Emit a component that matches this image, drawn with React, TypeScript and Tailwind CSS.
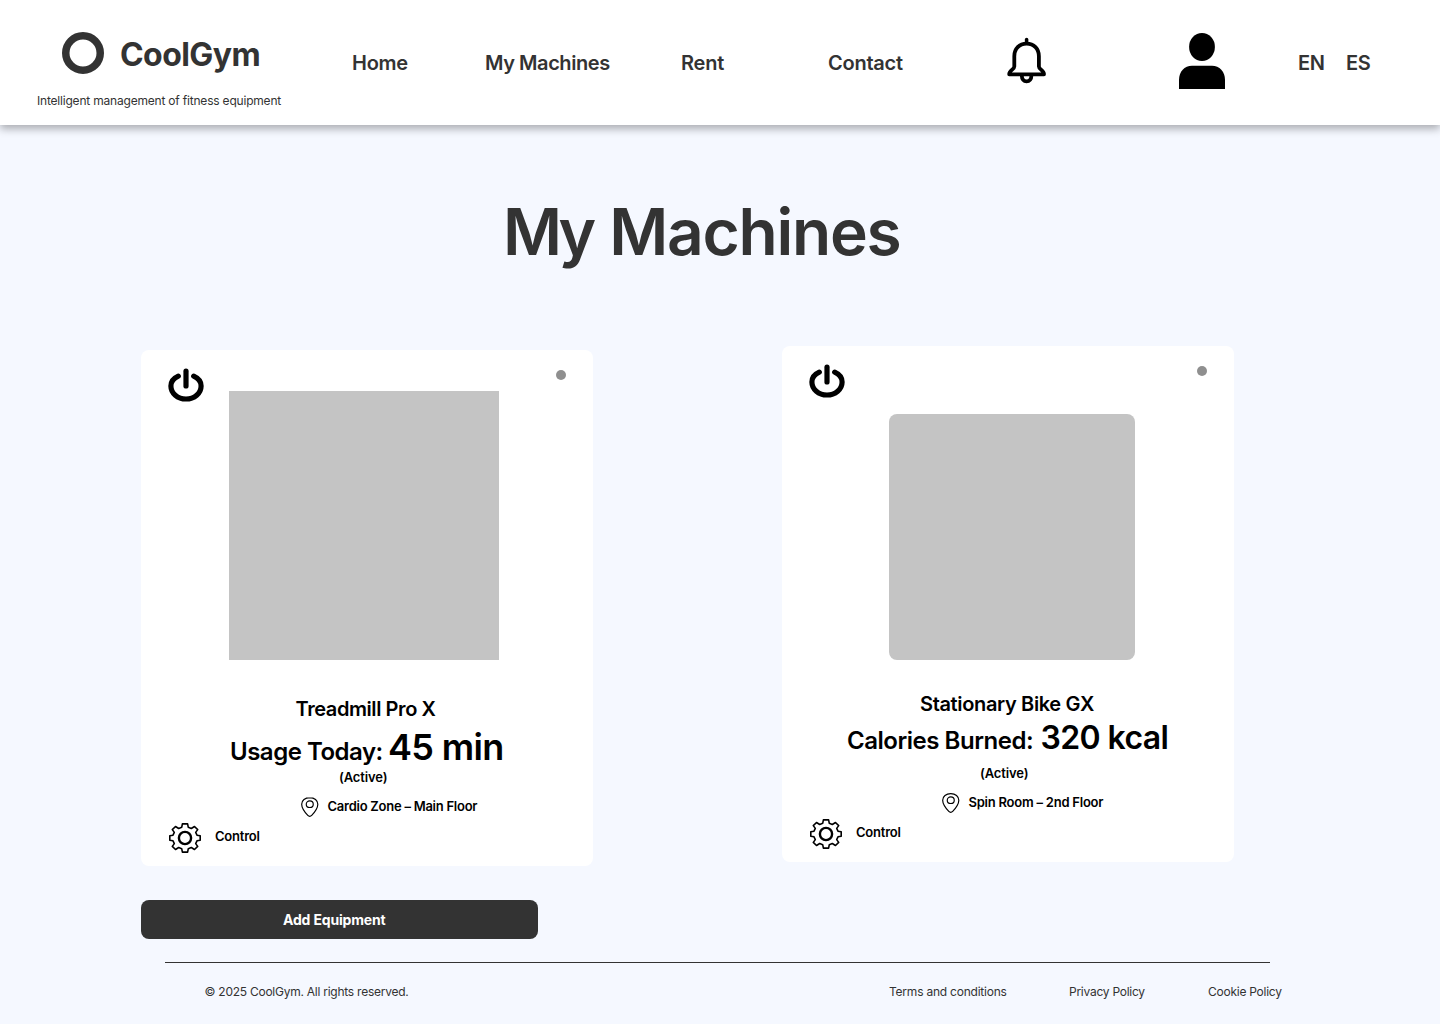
import type { ReactNode } from "react";

function PowerIcon() {
  return (
    <svg className="block h-[34px] w-[36px]" viewBox="0 0 36 34" fill="none" stroke="black" strokeWidth="5.2" strokeLinecap="round">
      <path d="M10.3 8.1C5.6 10.2 2.9 13.8 2.9 18C2.9 25.2 9.6 31 18 31S33.100 25.200 33.100 18C33.100 13.800 30.400 10.200 25.700 8.100" />
      <path d="M18 3.200V18" />
    </svg>
  );
}

function BellIcon() {
  return (
    <svg className="block h-[47px] w-[40px]" viewBox="0 0 40 47" fill="none" stroke="black" strokeWidth="3.800" strokeLinecap="round" strokeLinejoin="round">
      <path d="M19.600 2.400V6" strokeWidth="3.500" />
      <path d="M7.300 19.200C7.300 11.700 12.300 6.600 19.600 6.600S31.900 11.700 31.900 19.200V29.500C31.900 32.800 37 32.800 37 37.300H2.200C2.200 32.800 7.300 32.800 7.300 29.500Z" />
      <path d="M14.800 38.500C14.800 42 16.700 44.300 19.600 44.300S24.400 42 24.400 38.500" />
    </svg>
  );
}

function PersonIcon() {
  return (
    <svg className="block h-14 w-[46px]" viewBox="0 0 46 56">
      <ellipse cx="23" cy="14" rx="12.900" ry="14" />
      <path d="M0 56V47C0 38.500 5.500 32.700 13 32.700H33C40.500 32.700 46 38.500 46 47V56Z" />
    </svg>
  );
}

function PinIcon() {
  return (
    <svg className="mt-px block h-[20px] w-[17.500px]" viewBox="0 0 18 21" preserveAspectRatio="none" fill="none" stroke="black" strokeWidth="1.200">
      <path d="M9 0.700C4.200 0.700 0.700 3.700 0.700 7.600C0.700 10.800 4.300 16.400 7 19.400C8.200 20.700 9.800 20.700 11 19.400C13.700 16.400 17.300 10.800 17.300 7.600C17.300 3.700 13.800 0.700 9 0.700Z" />
      <ellipse cx="9" cy="7.500" rx="3.600" ry="3.500" />
    </svg>
  );
}

function GearIcon() {
  return (
    <svg className="block h-[30px] w-[32px]" viewBox="0 0 32 30" fill="none" stroke="black" strokeWidth="1.600" strokeLinejoin="round">
      <path d="M13.400 0.900H18.600L19.300 4.300L22.300 5.500L25.500 3.500L28.700 6.600L26.700 9.400L28 12.200L31.200 12.800V17.200L28 17.800L26.700 20.600L28.700 23.400L25.500 26.500L22.300 24.500L19.300 25.700L18.600 29.100H13.400L12.700 25.700L9.700 24.500L6.500 26.500L3.300 23.400L5.300 20.600L4 17.800L0.800 17.200V12.800L4 12.200L5.300 9.400L3.300 6.600L6.500 3.500L9.700 5.500L12.700 4.300Z" />
      <circle cx="16" cy="15" r="6.100" strokeWidth="2.400" />
    </svg>
  );
}

function Control() {
  return (
    <div className="flex pl-7">
      <GearIcon />
      <span className="ml-[14px] mt-[3px] h-5 text-[13px] leading-5 tracking-[-0.016em]">Control</span>
    </div>
  );
}

function Card({ className, children }: { className: string; children: ReactNode }) {
  return (
    <article className={`h-[516px] w-[452px] rounded-lg bg-white font-semibold text-black ${className}`}>
      <div className="flex h-[41px] items-start justify-between px-[27px]">
        <div className="pt-[18px]"><PowerIcon /></div>
        <div className="mt-5 size-[10px] rounded-full bg-[#8f8f8f]" />
      </div>
      {children}
    </article>
  );
}

export default function App() {
  return (
    <div className="flex h-[1024px] w-[1440px] flex-col overflow-hidden whitespace-nowrap bg-[#f5f8ff] font-[Inter,sans-serif] text-[#333333]">
      <header className="flex h-[125px] shrink-0 items-start bg-white shadow-[0_4px_8px_rgba(0,0,0,0.3)]">
        <div className="w-[352px] shrink-0 pt-8">
          <div className="flex pl-[62px]">
            <svg className="size-[42px]" viewBox="0 0 42 42" fill="none">
              <circle cx="21" cy="21" r="17.250" stroke="#333333" strokeWidth="7.500" />
            </svg>
            <span className="ml-4 mt-[3px] h-10 text-[32px] font-bold leading-10 tracking-[-0.018em]">CoolGym</span>
          </div>
          <p className="mt-[18px] pl-[37px] text-xs leading-4 tracking-[-0.0165em]">Intelligent management of fitness equipment</p>
        </div>
        <nav className="mt-[49px] flex text-xl font-semibold leading-7">
          <a className="w-[133px] tracking-[-0.014em]">Home</a>
          <a className="w-[196px] tracking-[-0.022em]">My Machines</a>
          <a className="w-[147px] tracking-[-0.012em]">Rent</a>
          <a className="w-[179px] tracking-[-0.012em]">Contact</a>
        </nav>
        <div className="mt-[37px]"><BellIcon /></div>
        <div className="ml-[132px] mt-[33px]"><PersonIcon /></div>
        <div className="mt-[49px] flex text-xl font-semibold leading-7 tracking-[-0.015em]">
          <span className="ml-[73px] w-12">EN</span>
          <span>ES</span>
        </div>
      </header>

      <main className="shrink-0">
        <h1 className="mt-[67px] pl-[503px] text-[64px] font-semibold leading-[80px] tracking-[-0.0195em] [word-spacing:-0.5px]">
          <span className="tracking-[-0.055em]">M</span>y Machines
        </h1>

        <div className="mt-[74px] flex items-start gap-[189px] pl-[141px]">
          <Card className="mt-1">
            <div className="ml-[88px] h-[269px] w-[270px] bg-[#c4c4c4]" />
            <h2 className="mt-[35px] h-[27px] pl-[154.500px] text-xl leading-7 tracking-[-0.021em]">Treadmill Pro X</h2>
            <p className="flex h-[45px] items-baseline pl-[89px] leading-[50px]">
              <span className="w-[158px] text-2xl leading-[50px] tracking-[-0.0205em]">Usage Today:</span>
              <span className="text-4xl leading-[50px] tracking-[-0.018em]">45 min</span>
            </p>
            <p className="pl-[198px] text-[13px] leading-5 tracking-[-0.01em]">(Active)</p>
            <div className="mt-[9px] flex h-[27px] pl-[160px]">
              <PinIcon />
              <span className="ml-[9px] text-[13px] leading-5 tracking-[-0.0195em]">Cardio Zone – Main Floor</span>
            </div>
            <Control />
          </Card>

          <Card className="">
            <div className="ml-[107px] mt-[27px] size-[246px] rounded-lg bg-[#c4c4c4]" />
            <h2 className="mt-[30px] pl-[138px] text-xl leading-7 tracking-[-0.0175em]">Stationary Bike GX</h2>
            <p className="flex h-[45px] items-baseline pl-[65px]">
              <span className="w-[193.500px] text-2xl leading-10 tracking-[-0.0195em]">Calories Burned:</span>
              <span className="text-[32px] leading-10 tracking-[-0.0192em]">320 kcal</span>
            </p>
            <p className="pl-[198px] text-[13px] leading-5 tracking-[-0.01em]">(Active)</p>
            <div className="mt-[9px] flex h-[27px] pl-[160px]">
              <PinIcon />
              <span className="ml-[9px] text-[13px] leading-5 tracking-[-0.018em]">Spin Room – 2nd Floor</span>
            </div>
            <Control />
          </Card>
        </div>

        <button className="ml-[141px] mt-[34px] block h-[39px] w-[397px] rounded-lg bg-[#333333] pl-[142px] text-left text-sm font-bold leading-5 tracking-[-0.012em] text-white">
          Add Equipment
        </button>
      </main>

      <footer className="ml-[165px] mt-[23px] w-[1105px] border-t border-[#333333] text-xs leading-4">
        <div className="mt-[21px] flex">
          <span className="ml-[39.500px] w-[684.500px] shrink-0 tracking-[-0.021em]">© 2025 CoolGym. All rights reserved.</span>
          <a className="w-[180px] shrink-0 tracking-[-0.0185em]">Terms and conditions</a>
          <a className="w-[139px] shrink-0 tracking-[-0.0215em]">Privacy Policy</a>
          <a className="tracking-[-0.021em]">Cookie Policy</a>
        </div>
      </footer>
    </div>
  );
}
